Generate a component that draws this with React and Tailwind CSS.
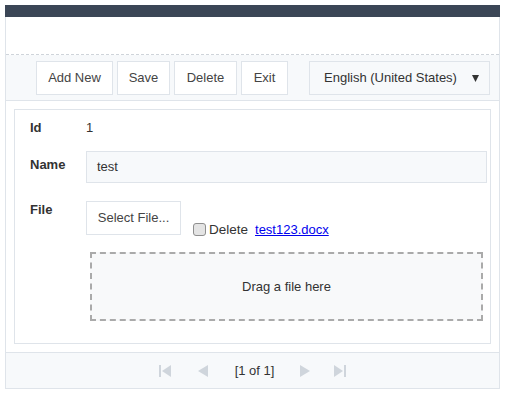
const font = { fontFamily: '"Liberation Sans", Arial, sans-serif' }

function ToolButton({ children, w }) {
  return (
    <button className={`h-[34px] ${w} bg-white border border-[#dfe4ea] text-[13px] text-[#444]`}>
      {children}
    </button>
  )
}

function PagerIcon({ dir, edge }) {
  // triangles for the pager, light gray like disabled buttons
  const left = dir === 'left'
  return (
    <svg width="13" height="12" viewBox="0 0 13 12" className="block">
      {edge && <rect x={left ? 0 : 11} y="0" width="2" height="12" fill="#cfd5dc" />}
      {left
        ? <polygon points={edge ? '3,6 12,0 12,12' : '1,6 11,0 11,12'} fill="#cfd5dc" />
        : <polygon points={edge ? '10,6 1,0 1,12' : '12,6 2,0 2,12'} fill="#cfd5dc" />}
    </svg>
  )
}

export default function App() {
  return (
    <div className="w-[509px] h-[396px] bg-white pt-[5px] pl-[5px]" style={font}>
      <div className="w-[495px]">
        <div className="h-[12px] bg-[#3b4656]" />
        <div className="border-x border-b border-[#dfe4ea]">
          {/* blank header strip */}
          <div className="h-[38px] bg-white border-b border-dashed border-[#cfd4da]" />

          {/* toolbar */}
          <div className="h-[46px] bg-[#f7f9fb] border-b border-[#dfe4ea] flex justify-end items-start pt-[6px] pr-[9px]">
            <div className="flex gap-[4px]">
              <ToolButton w="w-[77px]">Add New</ToolButton>
              <ToolButton w="w-[53px]">Save</ToolButton>
              <ToolButton w="w-[63px]">Delete</ToolButton>
              <ToolButton w="w-[47px]">Exit</ToolButton>
            </div>
            <div className="ml-[21px] w-[181px] h-[34px] border border-[#dfe4ea] bg-[#f7f9fb] flex items-center justify-between pl-[14px] pr-[10px] text-[13px] text-[#333]">
              <span>English (United States)</span>
              <svg width="7" height="7" viewBox="0 0 7 7"><polygon points="0,0 7,0 3.5,7" fill="#333" /></svg>
            </div>
          </div>

          {/* form panel */}
          <div className="px-[8px] pt-[8px] pb-[8px]">
            <div className="border border-[#dfe4ea] pl-[15px] pr-[3px] pt-[10px] pb-[22px] text-[13px] text-[#333]">
              <div className="flex h-[16px] items-center">
                <div className="w-[56px] font-bold">Id</div>
                <div>1</div>
              </div>

              <div className="flex mt-[15px]">
                <div className="w-[56px] font-bold pt-[4px]">Name</div>
                <div className="flex-1 h-[32px] bg-[#f7f9fb] border border-[#dfe4ea] flex items-center pl-[10px] text-[#333]">test</div>
              </div>

              <div className="flex mt-[18px]">
                <div className="w-[56px] font-bold -mt-[1px]">File</div>
                <div className="flex-1">
                  <div className="flex items-end">
                    <div className="w-[95px] h-[34px] bg-white border border-[#dfe4ea] flex items-center justify-center text-[#444]">Select File...</div>
                    <div className="flex items-center ml-[12px] -mb-[5px]">
                      <span className="w-[13px] h-[13px] rounded-[3px] border border-[#8f8f8f] bg-[#e4e4e4]" />
                      <span className="ml-[3px] text-[13.5px] text-[#333]">Delete</span>
                      <a className="ml-[7px] text-[#0000ee] underline">test123.docx</a>
                    </div>
                  </div>
                  <div className="ml-[4px] mr-[4px] mt-[17px] h-[69px] border-2 border-dashed border-[#aaaaaa] bg-[#f8f9fa] flex items-center justify-center text-[#333]">
                    Drag a file here
                  </div>
                </div>
              </div>
            </div>
          </div>

          {/* pager */}
          <div className="h-[36px] bg-[#f7f9fb] border-t border-[#dfe4ea] flex items-center justify-center text-[13px] text-[#333]">
            <PagerIcon dir="left" edge />
            <span className="ml-[25px]"><PagerIcon dir="left" /></span>
            <span className="ml-[25px]">[1 of 1]</span>
            <span className="ml-[24px]"><PagerIcon dir="right" /></span>
            <span className="ml-[22px]"><PagerIcon dir="right" edge /></span>
          </div>
        </div>
      </div>
    </div>
  )
}
